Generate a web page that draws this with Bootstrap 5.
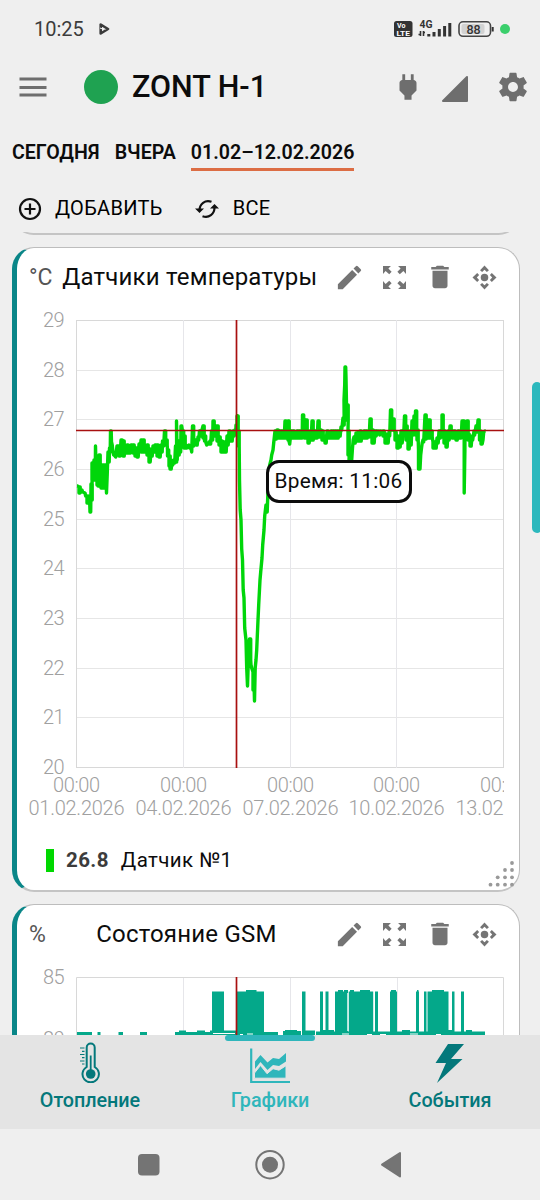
<!DOCTYPE html>
<html lang="ru">
<head>
  <meta charset="UTF-8" />
  <meta name="viewport" content="width=device-width, initial-scale=1.0" />
  <title>ZONT H-1</title>
  <link href="https://cdn.jsdelivr.net/npm/bootstrap@5.3.0/dist/css/bootstrap.min.css" rel="stylesheet"/>
  <style>
    body { font-family: Roboto, "Noto Sans", sans-serif; background: #efefef; color: #0c0c0c; }
    svg { display: block; flex: none; }
    .screen { width: 540px; height: 1200px; }
    .status-bar { height: 58px; padding: 0 23px 0 34px; font-size: 20px; color: #3c3c3c; }
    .top-bar { height: 58px; padding: 0 10px 0 19px; color: #6e6e6e; }
    .online-dot { width: 34px; height: 34px; margin-left: 37px; background: #1fa251; }
    .device-name { font-size: 30.5px; font-weight: 500; line-height: 1; margin-left: 14px; letter-spacing: 0; color: #0c0c0c; }
    .period-tabs { height: 55px; padding: 20px 12px 0; gap: 15px; font-size: 19.6px; font-weight: 600; line-height: 33px; }
    .period-tabs a { height: 35px; color: inherit; text-decoration: none; }
    .period-tabs a.active { border-bottom: 3px solid #dc6d44; }
    .actions { height: 61px; padding: 13px 17px 0; font-size: 20px; font-weight: 500; }
    .actions button { letter-spacing: .3px; line-height: 48px; }
    .scroll-area { height: 803px; padding: 0 20px 0 12px; }
    .graph-card { border: 1px solid #bdbdbd; border-bottom: 2px solid #c4c4c4; border-left: 5px solid #0a8688; border-radius: 22px; background: #fff; }
    .graph-card.prev { height: 43px; margin-top: -40px; border-left: 1px solid #bdbdbd; background: #efefef; }
    .temp-card { height: 645px; margin-top: 12px; }
    .gsm-card { height: 300px; margin-top: 12px; }
    .graph-head { height: 58px; padding: 0 12px; }
    .graph-head .unit { font-size: 23px; color: #555; font-weight: 400; padding-top: 2px; }
    .graph-head .title { font-size: 24px; letter-spacing: .2px; white-space: nowrap; }
    .graph-head .tool { width: 45px; color: #747474; }
    .plot { margin-left: 7px; }
    .plot text { font-size: 20px; font-weight: 300; fill: #a0a0a0; }
    .legend-row { height: 40px; margin-top: 4px; padding-left: 29px; font-size: 20.5px; }
    .swatch { width: 8px; height: 23px; background: #00d800; }
    .legend-row b { margin-left: 12px; font-weight: 700; color: #3c3c3c; letter-spacing: .4px; }
    .legend-row span { margin-left: 12px; letter-spacing: .4px; }
    .resize { right: 2px; bottom: 0; }
    .tip { left: 248.5px; top: 212px; width: 146px; height: 43px; border: 3px solid #0c0c0c; border-radius: 13px; font-size: 20.8px; letter-spacing: .3px; line-height: 1; background: #fff; }
    .thumb { left: 532px; top: 382px; width: 10px; height: 151px; border-radius: 5px; background: #2cb8bd; }
    .bottom-nav { height: 94px; background: #e4e4e4; }
    .bottom-nav a { color: #04787b; text-decoration: none; font-size: 19.8px; font-weight: 500; line-height: 30px; letter-spacing: -.05px; padding-top: 6px; }
    .bottom-nav a.active { color: #2fb6bb; }
    .bottom-nav a span { margin-top: 3px; }
    .nav-mark { left: 225px; top: 0; width: 90px; height: 6px; border-radius: 3px; background: #2fb6bb; }
    .system-nav { height: 71px; color: #747474; }
  </style>
</head>
<body>
  <svg width="0" height="0" class="position-absolute">
    <symbol id="edit" viewBox="0 0 24 24"><path fill="currentColor" d="M3 17.25V21h3.75L17.81 9.94l-3.75-3.75L3 17.25zM20.71 7.04a1 1 0 0 0 0-1.41l-2.34-2.34a1 1 0 0 0-1.41 0l-1.83 1.83 3.75 3.75 1.83-1.83z"/></symbol>
    <symbol id="expand" viewBox="0 0 24 24"><path fill="currentColor" d="M0 0H8.3L5.6 2.7 9 6 6.5 8.5 2.7 5.2 0 8.3zM24 0H15.7L18.4 2.7 15 6 17.5 8.5 21.3 5.2 24 8.3zM0 24H8.3L5.6 21.3 9 18 6.5 15.5 2.7 18.8 0 15.7zM24 24H15.7L18.4 21.3 15 18 17.5 15.5 21.3 18.8 24 15.7z"/></symbol>
    <symbol id="trash" viewBox="0 0 24 24"><path fill="currentColor" d="M6 19c0 1.1.9 2 2 2h8c1.1 0 2-.9 2-2V7H6v12zM19 4h-3.5l-1-1h-5l-1 1H5v2h14V4z"/></symbol>
    <symbol id="move" viewBox="0 0 26 26"><g fill="currentColor"><circle cx="13" cy="13" r="3.9"/><path d="M13 .5l4.6 4.9-2.1 2L13 5l-2.5 2.4-2.1-2zM13 25.5l4.6-4.9-2.1-2L13 21l-2.5-2.4-2.1 2zM.5 13l4.9-4.6 2 2.1L5 13l2.4 2.5-2 2.1zM25.5 13l-4.9-4.6-2 2.1L21 13l-2.4 2.5 2 2.1z"/></g></symbol>
  </svg>

  <div class="screen position-relative overflow-hidden d-flex flex-column">
    <div class="status-bar d-flex align-items-center">
      <span>10:25</span>
      <svg width="11" height="12" viewBox="0 0 11 12" style="margin-left:15px"><path d="M1.7 1.5v9L9 6z" fill="none" stroke="#3a3a3a" stroke-width="2.6" stroke-linejoin="round"/><path d="M1 5l4 1.5" stroke="#efefef" stroke-width="1"/></svg>
      <svg class="ms-auto" width="124" height="22" viewBox="393 18 124 22" font-family="Roboto" font-weight="700">
        <rect x="394" y="21" width="18.5" height="16" rx="2.5" fill="#333"/>
        <text x="397" y="28" font-size="7" fill="#fff">Vo</text>
        <text x="396.5" y="35.8" font-size="7" fill="#fff" textLength="13.5" lengthAdjust="spacingAndGlyphs">LTE</text>
        <text x="419.5" y="28.2" font-size="10.5" fill="#333" textLength="13" lengthAdjust="spacingAndGlyphs">4G</text>
        <path d="M420.5 31v5M418.5 34.5h2M423.5 31v5M425 32.5h-2" stroke="#333" stroke-width="1.6"/>
        <path d="M428.8 34v2.5M434 32v4.5M439.3 29v7.5M444.6 26v10.5M449.8 23v13.5" stroke="#333" stroke-width="3"/>
        <rect x="459" y="21.8" width="31.5" height="14.5" rx="4" fill="none" stroke="#444" stroke-width="1.6"/>
        <rect x="461.5" y="24" width="23" height="10" rx="2" fill="#d2d2d2"/>
        <path d="M492.7 27v4.5" stroke="#333" stroke-width="2"/>
        <text x="466.5" y="33.6" font-size="12.5" font-weight="500" fill="#333">88</text>
        <circle cx="505" cy="29" r="5" fill="#3bcf6c"/>
      </svg>
    </div>

    <div class="top-bar d-flex align-items-center">
      <svg width="28" height="20" viewBox="0 0 28 20"><path d="M.5 2h27M.5 10.5h27M.5 18h27" stroke="currentColor" stroke-width="2.8"/></svg>
      <div class="online-dot rounded-circle"></div>
      <h1 class="device-name mb-0">ZONT H-1</h1>
      <svg class="ms-auto" width="34" height="34" viewBox="0 0 24 24"><path fill="currentColor" d="M16 7V3h-2v4h-4V3H8v4C7 7 6 8 6 9v5.5L9.5 18v3h5v-3l3.5-3.5V9c0-1-1-2-2-2z"/></svg>
      <svg width="28" height="28" viewBox="0 0 28 28" style="margin:3px 0 0 16px"><path d="M2 26L26 2v24z" fill="currentColor" stroke="currentColor" stroke-width="2" stroke-linejoin="round"/></svg>
      <svg width="34" height="34" viewBox="0 0 24 24" style="margin-left:27px"><path fill="currentColor" d="M19.43 12.98c.04-.32.07-.64.07-.98s-.03-.66-.07-.98l2.11-1.65c.19-.15.24-.42.12-.64l-2-3.46c-.12-.22-.39-.3-.61-.22l-2.49 1c-.52-.4-1.08-.73-1.69-.98l-.38-2.65C14.46 2.18 14.25 2 14 2h-4c-.25 0-.46.18-.49.42l-.38 2.65c-.61.25-1.17.59-1.69.98l-2.49-1c-.23-.09-.49 0-.61.22l-2 3.46c-.13.22-.07.49.12.64l2.11 1.65c-.04.32-.07.65-.07.98s.03.66.07.98l-2.11 1.65c-.19.15-.24.42-.12.64l2 3.46c.12.22.39.3.61.22l2.49-1c.52.4 1.08.73 1.69.98l.38 2.65c.03.24.24.42.49.42h4c.25 0 .46-.18.49-.42l.38-2.65c.61-.25 1.17-.59 1.69-.98l2.49 1c.23.09.49 0 .61-.22l2-3.46c.12-.22.07-.49-.12-.64l-2.11-1.65zM12 15.5c-1.93 0-3.5-1.57-3.5-3.5s1.57-3.5 3.5-3.5 3.5 1.57 3.5 3.5-1.57 3.5-3.5 3.5z"/></svg>
    </div>

    <div class="period-tabs d-flex">
      <a href="#">СЕГОДНЯ</a>
      <a href="#">ВЧЕРА</a>
      <a href="#" class="active">01.02–12.02.2026</a>
    </div>

    <div class="actions d-flex align-items-start">
      <button class="border-0 bg-transparent p-0 d-flex align-items-center">
        <svg width="26" height="26" viewBox="0 0 26 26" style="margin-top:2px"><path d="M13 7.5v11M7.5 13h11" stroke="#111" stroke-width="2.2"/><circle cx="13" cy="13" r="10" fill="none" stroke="#111" stroke-width="2.2"/></svg>
        <span style="margin-left:12px">ДОБАВИТЬ</span>
      </button>
      <button class="border-0 bg-transparent p-0 d-flex align-items-center" style="margin-left:32px">
        <svg width="24" height="20" viewBox="0 0 24 20" style="margin-top:2px"><g fill="none" stroke="#111" stroke-width="2.2"><path d="M4.5 11.5C4.5 5 10 .5 16.5 2.8"/><path d="M19.5 8.5C19.5 15 14 19.5 7.5 17.2"/></g><path d="M0 9.5h9L4.5 14zM15 9.5h9L19.5 5z" fill="#111"/></svg>
        <span style="margin-left:14px">ВСЕ</span>
      </button>
    </div>

    <div class="scroll-area overflow-hidden">
      <div class="graph-card prev"></div>

      <div class="graph-card temp-card position-relative">
        <div class="graph-head d-flex align-items-center">
          <span class="unit">°C</span>
          <span class="title flex-grow-1 text-center">Датчики температуры</span>
          <span class="tool d-flex justify-content-center"><svg width="31" height="31"><use href="#edit"/></svg></span>
          <span class="tool d-flex justify-content-center"><svg width="23" height="23"><use href="#expand"/></svg></span>
          <span class="tool d-flex justify-content-center"><svg width="30" height="30"><use href="#trash"/></svg></span>
          <span class="tool d-flex justify-content-center"><svg width="25" height="25"><use href="#move"/></svg></span>
        </div>
        <svg class="plot" width="480" height="530" viewBox="24 306 480 530">
          <g id="tempGrid"></g>
          <path id="tempLine" fill="none" stroke="#00d60a" stroke-width="3.4" stroke-linejoin="round"/>
          <path d="M236.5 320V768M76 430.5H504" stroke="#a81010" stroke-width="1.7"/>
        </svg>
        <div class="legend-row d-flex align-items-center">
          <i class="swatch"></i><b>26.8</b><span>Датчик №1</span>
        </div>
        <svg class="resize position-absolute" width="30" height="30" viewBox="487 860 30 30" fill="#999">
          <circle cx="512" cy="863" r="1.9"/><circle cx="512" cy="870" r="1.9"/><circle cx="505" cy="870" r="1.9"/><circle cx="512" cy="877.3" r="1.9"/><circle cx="505" cy="877.3" r="1.9"/><circle cx="497.7" cy="877.3" r="1.9"/><circle cx="512" cy="884.7" r="1.9"/><circle cx="505" cy="884.7" r="1.9"/><circle cx="497.7" cy="884.7" r="1.9"/><circle cx="490.5" cy="884.7" r="1.9"/>
        </svg>
        <div class="tip position-absolute d-flex align-items-center justify-content-center">Время: 11:06</div>
      </div>

      <div class="graph-card gsm-card">
        <div class="graph-head d-flex align-items-center">
          <span class="unit">%</span>
          <span class="title flex-grow-1 text-center">Состояние GSM</span>
          <span class="tool d-flex justify-content-center"><svg width="31" height="31"><use href="#edit"/></svg></span>
          <span class="tool d-flex justify-content-center"><svg width="23" height="23"><use href="#expand"/></svg></span>
          <span class="tool d-flex justify-content-center"><svg width="30" height="30"><use href="#trash"/></svg></span>
          <span class="tool d-flex justify-content-center"><svg width="25" height="25"><use href="#move"/></svg></span>
        </div>
        <svg class="plot" width="480" height="90" viewBox="24 963 480 90">
          <text x="43" y="983.5" textLength="21.5">85</text>
          <text x="43" y="1046" textLength="21.5">80</text>
          <path d="M183.5 977V1053M290.5 977V1053M397.5 977V1053" stroke="#e6e6ea"/>
          <path d="M76.5 1053V977.5H503.5V1053" fill="none" stroke="#d8d8d8"/>
          <g id="gsmBars" fill="#04a88a"></g>
          <path d="M236.5 977V1053" stroke="#a81010" stroke-width="1.7"/>
        </svg>
      </div>
    </div>

    <div class="bottom-nav position-relative row g-0">
      <div class="nav-mark position-absolute"></div>
      <a href="#" class="col d-flex flex-column align-items-center">
        <svg width="22" height="42" viewBox="79 1038.5 22 42"><g fill="none" stroke="currentColor"><path d="M86.7 1064.5V1045a4 4 0 0 1 8 0v19.5a8.2 8.2 0 1 1-8 0z" stroke-width="2"/><path d="M80 1045.5h4.5M82 1048.8h2.5M80 1052h4.5M82 1055.2h2.5M80 1058.5h4.5M82 1061.5h2.5" stroke-width="1.2"/><path d="M90.7 1053v15" stroke-width="1.8"/></g><circle cx="90.7" cy="1071.5" r="4.8" fill="currentColor"/></svg>
        <span>Отопление</span>
      </a>
      <a href="#" class="active col d-flex flex-column align-items-center">
        <svg width="40" height="42" viewBox="250 1038.5 40 42"><path d="M251.2 1046v33.5H290" fill="none" stroke="currentColor" stroke-width="2.2"/><path d="M255 1059l5.5-6.5 7 7.5 5.5-4.5 6 1 7-6v8.5l-7 4.5-6-1-5.5 5-7-8-5.5 7z" fill="currentColor"/><path d="M254.5 1070.5l6-7.5 6.5 8.2 6-5 6 1.5 7-4.5v12.5h-31.5z" fill="currentColor" stroke="#e4e4e4" stroke-width="1"/></svg>
        <span>Графики</span>
      </a>
      <a href="#" class="col d-flex flex-column align-items-center">
        <svg width="30" height="42" viewBox="435 1041 30 42"><path d="M448 1044H464l-13 15H462.5L437 1083l9-20H435.5z" fill="currentColor"/></svg>
        <span>События</span>
      </a>
    </div>

    <div class="system-nav d-flex justify-content-center align-items-center">
      <svg width="264" height="32" viewBox="138 1149 264 32" fill="currentColor">
        <rect x="138" y="1154" width="21.5" height="21.5" rx="4"/>
        <circle cx="270" cy="1164.7" r="13.7" fill="none" stroke="currentColor" stroke-width="2"/><circle cx="270" cy="1164.7" r="8"/>
        <path d="M382 1164.7L400 1153v23.4z" stroke="currentColor" stroke-width="2" stroke-linejoin="round"/>
      </svg>
    </div>

    <div class="thumb position-absolute"></div>
  </div>

  <script src="https://cdn.jsdelivr.net/npm/bootstrap@5.3.0/dist/js/bootstrap.bundle.min.js"></script>
  <script>
    // x, first and last sensor reading in chart units
    const temp = [
      [77,486,486],[79,487,493],[82,490,492],[85,493,496],[87,496,503],[89,498,502],[90,512,512],[91,484,500],[92,463,480],[94,460,480],[95.5,446,475],
      [97,460,485],[98,464,486],[99,455,464],[101,465,488],[103,465,488],[105,465,484],[106.5,493,475],[108,452,462],[109.5,448,452],[110.5,431,431],[111.5,442,445],[113,452,455],[115,456,457],
      [117,446,453],[119,446,456],[121,440,453],[123,441,456],[125,446,453],[127,445,453],[129,446,453],[131,445,452],[133,445,453],[135,448,456],[137,448,457],[139,444,451],[141,440,452],[143,440,452],[145,446,452],
      [147,445,455],[149,449,462],[151,450,456],[153,446,452],[155,445,452],[157,445,456],[159,448,457],[161,445,452],[162.5,441,446],[164.5,431,445],[166,440,445],[167.5,450,456],[169,456,466],[170,460,469],[172,462,465],[174,460,463],
      [175.5,446,462],[176.5,421,460],[178,441,455],[179.5,441,452],[181,426,426],[182.5,431,441],[184,436,448],[186,445,448],[189,445,448],[191,448,452],[192.5,426,446],[194,441,444],[196,440,445],[198,437,440],[199.5,431,436],[201,431,431],[203,426,438],[204.5,436,441],[206,443,445],[208,443,444],[210,441,444],[211.5,431,440],[213,421,434],[215,426,436],[217,426,441],[219,437,445],[221,441,452],[223,442,452],[225,442,452],[227,436,445],[229,431,441],[231,433,441],[233,431,436],[235,430,433],[236,425,430],[237,416,430],[238,431,446],[239.5,480,510],[241,520,549],[242.5,560,590],[244,598,628],[246,640,668],[247.5,686,665],[249.5,639,660],[251,665,668],[253,672,690],[254.5,701,668],[256,660,650],[258,620,605],[260,580,572],[262,558,545],[264,530,516],[266,505,512],[268,490,480],[269,470,465],[271,460,455],[273,450,443],[275,431,439],[277,430,438],[279,431,438],[281,431,438],[283,431,438],[285,421,438],[288,421,440],[289,441,444],[291,431,438],
      [293,431,438],[295,432,438],[297,431,438],[299,431,438],[301,431,438],[302.5,415,435],[304.5,420,438],[306,420,438],[308,437,443],[310,431,440],[312,421,440],[314,431,438],[316,431,438],[318,421,437],[320,430,437],[322,431,440],[325,436,443],[327,431,438],[329,432,438],[331,431,438],[333,431,438],[335,431,438],[337,431,438],[339,431,436],[341,427,430],[343,418,425],[344,400,385],[345,367,367],[346,378,415],[347,405,420],[348,431,455],[349,461,461],[351,461,460],[352.5,448,440],[354,437,443],[356,433,441],[358,432,441],[360,431,441],[362,432,438],[364,431,438],[366,431,438],[368,431,437],[370,419,432],[372,430,443],[373,437,443],[375,431,436],[377,431,433],[379,431,435],[381,431,433],[383,431,436],[385,434,443],[387,436,443],[389,432,436],[390.5,410,430],[393,419,430],[395,432,440],[397,436,448],[399,438,447],[401,431,443],[403,431,435],[404.5,416,431],[406,426,440],[408,437,449],[410,431,445],[412,421,435],[414,416,430],[415.5,411,435],[417,430,440],[418.5,450,469],[420,469,455],[421.5,448,443],[423,440,442],[425,415,439],[427,420,438],[429,420,438],[431,431,437],[433,442,448],[435,442,448],[437,438,443],[439,431,438],[441,431,437],[442,415,430],[444,431,443],[446,440,447],[448,431,440],[450,426,434],[452,431,438],[454,431,438],[456,433,440],[458,431,438],[460,432,438],[462,421,436],[463,421,432],[464.2,493,450],[465,425,438],[467,421,436],[468,434,440],[470,437,446],[472,436,440],[474,431,435],[476,426,432],[478,420,430],[479.5,431,440],[481,437,444],[483,440,432],[485,431,431]
    ];
    document.getElementById("tempLine").setAttribute("d", "M" + temp.map(([x, a, b]) => {
      // readings that flicker between two values fill the whole band
      if (b - a >= 5 && b - a < 28) return `${x} ${a}V${b}H${x + 0.7}V${a}H${x + 1.2}V${b}`;
      return `${x} ${a}L${x + 0.7} ${b}`;
    }).join("L"));

    // grid and axis labels
    let grid = "";
    for (let i = 0; i <= 9; i++) {
      const y = 320.5 + Math.round(i * 49.67);
      grid += `<path d="M76 ${y}H504" stroke="${i % 9 ? "#e6e6e6" : "#d8d8d8"}"/><text x="43" y="${y + 6}" textLength="21.5">${29 - i}</text>`;
    }
    ["01", "04", "07", "10", "13"].forEach((day, i) => {
      const x = 76.5 + Math.round(i * 106.75);
      grid += `<path d="M${x} 320V768" stroke="${i % 4 ? "#e6e6ea" : "#d8d8d8"}"/>
        <text x="${x - 23.5}" y="792" textLength="47">00:00</text>
        <text x="${x - 48}" y="815" textLength="96">${day}.02.2026</text>`;
    });
    document.getElementById("tempGrid").innerHTML = grid;

    // x, width, top of the signal level blocks
    const gsm = [
      [77,15,1032],[97.5,3,1032],[118.5,4.5,1032],[140,7,1032],[175,7,1032],[179,7,1030.5],[186,11,1032],[197,8,1030.5],[205,7,1032],[210,27,1030.5],
      [212,12,991.5],[237,27,991.5],[246,10.5,990],[264,14,1032],[283,16,1031],[285,12,1030],[302,3.5,991.5],[299,2,1031],[303,12,1030.5],
      [316,169,1031.5],[322,12,1030],[320,3,991.5],[325.5,3,991.5],[335,12.5,991.5],[338,5,990],[344,4,990],[348.7,24.5,991.5],[350,4,990],[360,10,990],[375,3,991.5],[390,7,991.5],[391,5,990],[416,3,991.5],[417,1.5,990],[424,2.5,991.5],[427.5,21,991.5],[432,12,990],[452,2.5,991.5],[461,3,991.5],[402,8,1030],[440,12,1030],[466,6,1030]
    ];
    document.getElementById("gsmBars").innerHTML = gsm.map(b => `<rect x="${b[0]}" y="${b[2]}" width="${b[1]}" height="${1036 - b[2]}"/>`).join("") +
      '<path d="M213 1033.5h22M240 1034.5h3M247 1034h6M342 1034h7M367 1034.5h5M380 1034.5h6M410 1034h8M436 1034.5h5M347.8 993v38" stroke="#fff" stroke-width="1"/>';
  </script>
</body>
</html>
